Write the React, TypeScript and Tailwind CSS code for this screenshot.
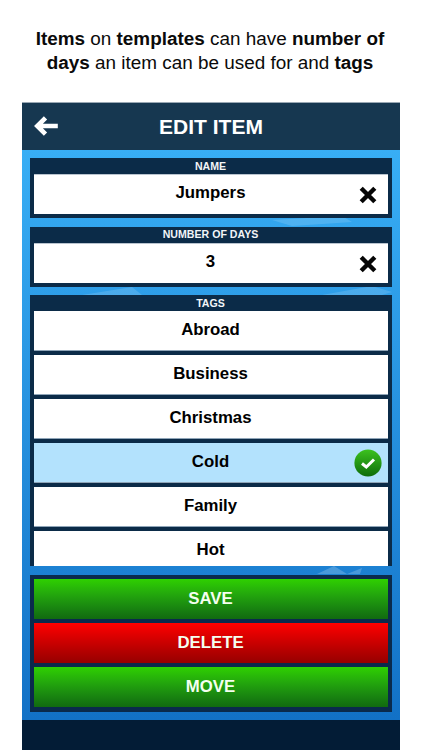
import React from "react";

const font = { fontFamily: '"Liberation Sans", Arial, sans-serif' };

function Cross() {
  return (
    <svg width="18" height="18" viewBox="0 0 18 18" className="absolute right-[11px] top-[11px]">
      <path d="M2.2 2.2 L15.8 15.8 M15.8 2.2 L2.2 15.8" stroke="#050505" strokeWidth="4.4" fill="none" />
    </svg>
  );
}

function Check() {
  return (
    <svg width="28" height="28" viewBox="0 0 28 28" className="absolute right-[6px] top-[6px]">
      <defs>
        <linearGradient id="chk" x1="0" y1="0" x2="0" y2="1">
          <stop offset="0" stopColor="#3cc21f" />
          <stop offset="1" stopColor="#0e6c0a" />
        </linearGradient>
      </defs>
      <circle cx="14" cy="14" r="13.6" fill="url(#chk)" />
      <path d="M8 14.5 L12.3 18 L20 10.5" stroke="#fff" strokeWidth="3" fill="none" />
    </svg>
  );
}

function Field({ label, value, leading }: { label: string; value: string; leading: string }) {
  return (
    <div className="bg-[#0b2b48] px-[4px] pb-[4px]">
      <div className={`h-[16px] pr-[1px] text-center text-[10.6px] ${leading} font-bold text-[#f2f5f8]`}>{label}</div>
      <div className="relative h-[40px] pr-[1px] bg-white border-t border-t-[#b9c4cf] text-center text-[16.8px] leading-[35px] font-bold text-black">
        {value}
        <Cross />
      </div>
    </div>
  );
}

function Tag({ name, on, cut }: { name: string; on?: boolean; cut?: boolean }) {
  return (
    <div
      className={`relative shrink-0 pr-[1px] text-center text-[16.8px] leading-[38px] font-bold text-black ${
        cut ? "h-[36px] bg-white" : on ? "h-[40px] bg-[#b3e2fd] border-b border-b-[#8fa5b8]" : "h-[40px] bg-white border-b border-b-[#8fa5b8]"
      }`}
    >
      {name}
      {on && <Check />}
    </div>
  );
}

function Btn({ label, red }: { label: string; red?: boolean }) {
  return (
    <div
      className={`h-[40px] pr-[1px] text-center text-[16.8px] leading-[40px] font-bold text-[#f4fff0] bg-gradient-to-b ${
        red ? "from-[#ff0000] to-[#960000]" : "from-[#2fd000] to-[#116a10]"
      }`}
    >
      {label}
    </div>
  );
}

export default function App() {
  return (
    <div className="w-[422px] h-[750px] bg-white overflow-hidden flex flex-col" style={font}>
      <div className="h-[102px] pt-[27px] pr-[2px] text-center text-[18.9px] leading-[24px] font-bold text-[#0a0a0a]">
        <b>Items</b> <span className="font-normal">on</span> <b>templates</b> <span className="font-normal">can have</span> <b>number of</b>
        <br />
        <b>days</b> <span className="font-normal">an item can be used for and</span> <b>tags</b>
      </div>
      <div className="mx-[22px] w-[378px] flex-1 flex flex-col border-t border-t-[#9aa8b4]">
        <div className="relative h-[47px] shrink-0 bg-[#163750] text-center text-[21px] leading-[48px] font-bold text-white">
          <svg width="24" height="20" viewBox="0 0 24 20" className="absolute left-[12px] top-[13px]">
            <path d="M11.5 1.8 L3.3 10 L11.5 18.2 M3.5 10 L23.8 10" stroke="#fff" strokeWidth="4.6" fill="none" />
          </svg>
          EDIT ITEM
        </div>
        <div className="relative h-[570px] shrink-0 bg-gradient-to-b from-[#38aef5] to-[#1271c6] px-[8px] pt-[8px] flex flex-col">
          <svg width="378" height="570" viewBox="0 0 378 570" className="absolute left-0 top-0">
            <path d="M60 145 L110 137 L120 145 Z M300 145 L350 136 L370 142 L360 145 Z M250 70 L320 66 L330 72 L270 76 Z" fill="#ffffff" opacity="0.14" />
            <path d="M295 424 L312 416 L325 424 Z M325 424 L340 418 L338 424 Z" fill="#ffffff" opacity="0.2" />
          </svg>
          <div className="relative">
            <Field label="NAME" value="Jumpers" leading="leading-[16px]" />
          </div>
          <div className="relative mt-[9px]">
            <Field label="NUMBER OF DAYS" value="3" leading="leading-[15px]" />
          </div>
          <div className="relative mt-[8px] h-[271px] bg-[#0b2b48] px-[4px] flex flex-col overflow-hidden">
            <div className="h-[16px] shrink-0 pr-[1px] text-center text-[10.6px] leading-[16px] font-bold text-[#f2f5f8]">TAGS</div>
            <div className="flex flex-col gap-[4px]">
              <Tag name="Abroad" />
              <Tag name="Business" />
              <Tag name="Christmas" />
              <Tag name="Cold" on />
              <Tag name="Family" />
              <Tag name="Hot" cut />
            </div>
          </div>
          <div className="relative mt-[9px] h-[137px] bg-[#0a2a4c] p-[4px] flex flex-col gap-[4px]">
            <Btn label="SAVE" />
            <Btn label="DELETE" red />
            <Btn label="MOVE" />
          </div>
        </div>
        <div className="flex-1 bg-[#031c36]" />
      </div>
    </div>
  );
}
